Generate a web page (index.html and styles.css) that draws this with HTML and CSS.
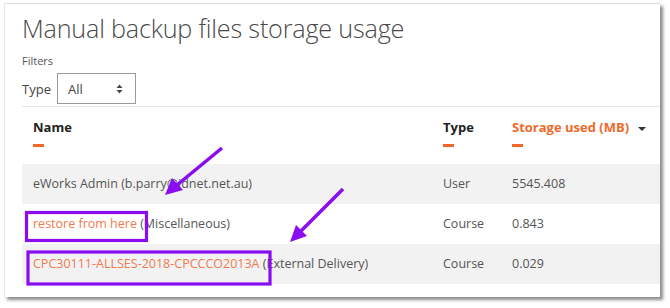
FILE: index.html
```html
<!DOCTYPE html>
<html>
<head>
<meta charset="utf-8">
<link rel="stylesheet" href="styles.css">
</head>
<body>
<div class="frame">
  <div class="card">
    <h1 class="title">Manual backup files storage usage</h1>
    <div class="filters-label">Filters</div>
    <div class="filter-row">
      <span class="filter-type">Type</span>
      <div class="select">
        <span>All</span>
        <svg class="updown" width="7" height="10" viewBox="0 0 7 10"><path d="M3.5 0.5 L6.5 4 L0.5 4 Z M3.5 9.5 L6.5 6 L0.5 6 Z" fill="#444"/></svg>
      </div>
    </div>
    <table class="usage">
      <thead>
        <tr>
          <th class="c-name"><span class="hd">Name</span><span class="dash"></span></th>
          <th class="c-type"><span class="hd">Type</span><span class="dash"></span></th>
          <th class="c-size"><span class="hd sorted">Storage used (MB) <span class="caret"></span></span><span class="dash"></span></th>
        </tr>
      </thead>
      <tbody>
        <tr class="odd">
          <td class="c-name">eWorks Admin (b.parry@idnet.net.au)</td>
          <td class="c-type">User</td>
          <td class="c-size">5545.408</td>
        </tr>
        <tr>
          <td class="c-name"><a class="lnk">restore from here</a> (Miscellaneous)</td>
          <td class="c-type">Course</td>
          <td class="c-size">0.843</td>
        </tr>
        <tr class="odd">
          <td class="c-name"><a class="lnk">CPC30111-ALLSES-2018-CPCCCO2013A</a> (External Delivery)</td>
          <td class="c-type">Course</td>
          <td class="c-size">0.029</td>
        </tr>
      </tbody>
    </table>
  </div>
  <svg class="annot" width="670" height="308" viewBox="0 0 670 308">
    <rect x="26.5" y="212.5" width="120" height="28" fill="none" stroke="#8a0cf0" stroke-width="3.2"/>
    <rect x="28" y="252" width="242" height="32" fill="none" stroke="#8a0cf0" stroke-width="3.2"/>
    <line x1="222" y1="148" x2="177" y2="185" stroke="#8a0cf0" stroke-width="3.5"/>
    <polygon points="165,195 172,178 183,190" fill="#8a0cf0"/>
    <line x1="343" y1="189" x2="301" y2="231" stroke="#8a0cf0" stroke-width="3.5"/>
    <polygon points="290,242 296,225 307,236" fill="#8a0cf0"/>
  </svg>
</div>
</body>
</html>
```

FILE: styles.css
```css
html, body {
  margin: 0;
  padding: 0;
  background: #ffffff;
}
.frame {
  position: relative;
  width: 670px;
  height: 308px;
  padding: 3px 0 0 4px;
  box-sizing: border-box;
}
.card {
  width: 656px;
  height: 294px;
  box-sizing: border-box;
  border-top: 1px solid #dcdcdc;
  border-left: 1px solid #e8e8e8;
  box-shadow: 3px 3px 3px rgba(0,0,0,0.45);
  padding-left: 17px;
  overflow: hidden;
  font-family: "Open Sans", "Noto Sans", sans-serif;
  color: #555;
  background: #fff;
}
.title {
  margin: 0;
  padding-top: 7px;
  font-weight: 300;
  font-size: 25.2px;
  line-height: 35px;
  color: #4a4a4a;
  letter-spacing: -0.2px;
}
.filters-label {
  font-size: 11px;
  line-height: 14px;
  margin-top: 8px;
  color: #555;
}
.filter-row {
  display: flex;
  align-items: center;
  margin-top: 5px;
  height: 31px;
}
.filter-type {
  font-size: 13px;
  color: #444;
  width: 35px;
}
.select {
  width: 79px;
  height: 31px;
  box-sizing: border-box;
  border: 1px solid #9a9a9a;
  display: flex;
  align-items: center;
  justify-content: space-between;
  padding: 0 12px 0 10px;
  font-size: 13px;
  color: #444;
}
.usage {
  margin-top: 2px;
  width: 640px;
  border-collapse: collapse;
  border-top: 1px solid #e6e6e6;
  font-size: 12.5px;
}
.usage th {
  text-align: left;
  vertical-align: top;
  height: 57px;
  box-sizing: border-box;
  padding: 11px 0 0 11px;
}
.hd {
  display: block;
  font-weight: 700;
  font-size: 13px;
  color: #222;
  line-height: 18px;
}
.hd.sorted {
  color: #f0692a;
}
.caret {
  display: inline-block;
  width: 0;
  height: 0;
  border-left: 4px solid transparent;
  border-right: 4px solid transparent;
  border-top: 4px solid #333;
  margin-left: 6px;
  vertical-align: middle;
}
.dash {
  display: block;
  width: 11px;
  height: 3px;
  background: #f0692a;
  margin-top: 8px;
}
.usage td {
  height: 40px;
  padding: 0 0 0 11px;
  vertical-align: middle;
  color: #555;
}
.usage tr.odd td {
  background: #f2f2f2;
}
.c-name { width: 399px; }
.c-type { width: 58px; }
.lnk {
  color: #f07a4e;
  text-decoration: none;
}
.annot {
  position: absolute;
  left: 0;
  top: 0;
  pointer-events: none;
}
```
